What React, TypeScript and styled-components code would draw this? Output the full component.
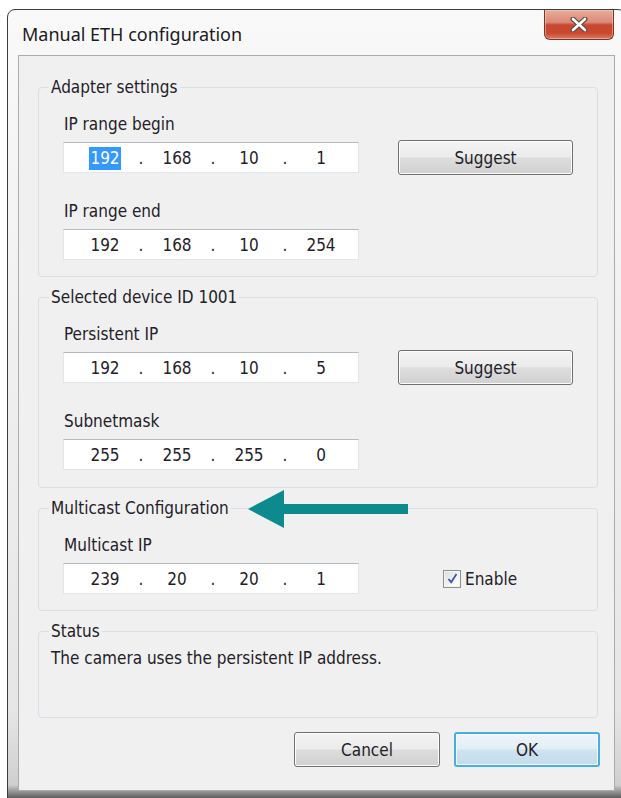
import React from 'react';
import styled, { createGlobalStyle } from 'styled-components';

const GlobalStyle = createGlobalStyle`
  html, body {
    margin: 0;
    padding: 0;
    background: #ffffff;
    overflow: hidden;
  }
  body {
    font-family: 'DejaVu Sans Condensed', 'DejaVu Sans', Tahoma, sans-serif;
    font-size: 17px;
    color: #1f2128;
  }
`;

const Window = styled.div`
  box-sizing: border-box;
  width: 619px;
  margin: 9px 0 0 7px;
  border: 1px solid #3a3d42;
  border-radius: 8px 8px 0 0;
  padding: 0 10px 8px 10px;
  background: linear-gradient(
    to bottom,
    #f9f9f9 0px,
    #f1f1f1 300px,
    #e6e6e6 700px,
    #cfcfcf 775px,
    #4a4a4a 790px
  );
`;

const TitleBar = styled.div`
  display: flex;
  align-items: flex-start;
  justify-content: space-between;
  height: 45px;
`;

const Title = styled.h1`
  margin: 13px 0 0 4px;
  font-family: 'Noto Sans', 'Open Sans', sans-serif;
  font-size: 18px;
  font-weight: 400;
  color: #1b1b24;
  line-height: 22px;
`;

const CloseButton = styled.button`
  display: flex;
  align-items: center;
  justify-content: center;
  width: 70px;
  height: 30px;
  margin-right: 1px;
  padding: 0;
  border: 1px solid #7b3325;
  border-top: none;
  border-radius: 0 0 6px 6px;
  background: linear-gradient(
    to bottom,
    #e9ab9c 0%,
    #d98b78 42%,
    #c9472e 52%,
    #c94a30 80%,
    #da7c63 100%
  );
  box-shadow: inset 0 0 0 1px rgba(255, 220, 210, 0.45);
`;

const Client = styled.div`
  box-sizing: border-box;
  height: 736px;
  border: 1px solid #a9abaf;
  background: #f0f0f0;
  padding: 21px 16px 0 19px;
  display: flex;
  flex-direction: column;
  gap: 10px;
  position: relative;
`;

const Group = styled.fieldset<{ $tail?: number; $min?: number }>`
  margin: 0;
  min-width: 0;
  border: 1px solid #d5dfe5;
  border-radius: 4px;
  padding: 0 0 ${(p) => p.$tail ?? 16}px 24px;
  min-height: ${(p) => p.$min ?? 0}px;
  box-sizing: border-box;
`;

const Legend = styled.legend`
  margin-left: -14px;
  padding: 0 2px;
  line-height: 20px;
`;

const FieldLabel = styled.div`
  line-height: 20px;
  margin: 17px 0 8px 1px;

  & + div + & {
    margin-top: 28px;
  }
`;

const Row = styled.div`
  display: flex;
  align-items: center;
  height: 31px;
`;

const IpBox = styled.div`
  box-sizing: border-box;
  display: flex;
  align-items: center;
  width: 296px;
  height: 31px;
  padding-left: 5px;
  background: #ffffff;
  border: 1px solid #e2e5ea;
  border-top-color: #b7bac1;
`;

const Octet = styled.span`
  width: 72px;
  text-align: center;
`;

const Dot = styled.span`
  display: flex;
  justify-content: center;
  width: 0;
`;

const Selection = styled.span`
  background: #3399ff;
  color: #ffffff;
  padding: 1px 1px 2px;
`;

const PushButton = styled.button<{ $primary?: boolean }>`
  box-sizing: border-box;
  width: 146px;
  height: 35px;
  font-family: inherit;
  font-size: 17px;
  color: #1f2128;
  border-radius: 3px;
  border: ${(p) => (p.$primary ? '2px solid #46aee6' : '1px solid #707070')};
  background: ${(p) =>
    p.$primary
      ? 'linear-gradient(to bottom, #edf5fa 0%, #e2eef6 48%, #cfe3f0 52%, #c3dbeb 100%)'
      : 'linear-gradient(to bottom, #f4f4f4 0%, #ebebeb 48%, #dddddd 52%, #d0d0d0 100%)'};
  box-shadow: inset 0 0 0 1px #fcfcfc;
`;

const SuggestButton = styled(PushButton)`
  width: 175px;
  margin-left: 39px;
`;

const CheckLabel = styled.label`
  display: flex;
  align-items: center;
  gap: 4px;
  margin-left: 84px;
`;

const CheckBox = styled.span`
  box-sizing: border-box;
  display: flex;
  align-items: center;
  justify-content: center;
  width: 18px;
  height: 18px;
  border: 1px solid #8f8f8f;
  background: linear-gradient(135deg, #d8dbe0 0%, #f3f4f6 60%, #ffffff 100%);
  box-shadow: inset 0 0 0 1px #f4f4f4;
`;

const StatusText = styled.div`
  line-height: 20px;
  margin: 7px 0 0 -12px;
`;

const Footer = styled.div`
  display: flex;
  justify-content: flex-end;
  gap: 14px;
  margin: 4px -2px 0 0;
`;

const Arrow = styled.svg`
  position: absolute;
  left: 229px;
  top: 433px;
`;

const IpField = ({ octets, selected }: { octets: string[]; selected?: number }) => (
  <IpBox>
    {octets.map((o, i) => (
      <React.Fragment key={i}>
        {i > 0 && <Dot>.</Dot>}
        <Octet>{selected === i ? <Selection>{o}</Selection> : o}</Octet>
      </React.Fragment>
    ))}
  </IpBox>
);

const App = () => {
  return (
    <>
      <GlobalStyle />
      <Window>
        <TitleBar>
          <Title>Manual ETH configuration</Title>
          <CloseButton aria-label="Close">
            <svg width="20" height="15" viewBox="0 0 20 15">
              <path d="M4 2 L16 13 M16 2 L4 13" stroke="#5a4a48" strokeWidth="5" strokeLinecap="round" />
              <path d="M4 2 L16 13 M16 2 L4 13" stroke="#ffffff" strokeWidth="2.6" strokeLinecap="round" />
            </svg>
          </CloseButton>
        </TitleBar>
        <Client>
          <Group>
            <Legend>Adapter settings</Legend>
            <FieldLabel>IP range begin</FieldLabel>
            <Row>
              <IpField octets={['192', '168', '10', '1']} selected={0} />
              <SuggestButton>Suggest</SuggestButton>
            </Row>
            <FieldLabel>IP range end</FieldLabel>
            <Row>
              <IpField octets={['192', '168', '10', '254']} />
            </Row>
          </Group>

          <Group $tail={17}>
            <Legend>Selected device ID 1001</Legend>
            <FieldLabel>Persistent IP</FieldLabel>
            <Row>
              <IpField octets={['192', '168', '10', '5']} />
              <SuggestButton>Suggest</SuggestButton>
            </Row>
            <FieldLabel>Subnetmask</FieldLabel>
            <Row>
              <IpField octets={['255', '255', '255', '0']} />
            </Row>
          </Group>

          <Group>
            <Legend>Multicast Configuration</Legend>
            <FieldLabel>Multicast IP</FieldLabel>
            <Row>
              <IpField octets={['239', '20', '20', '1']} />
              <CheckLabel>
                <CheckBox>
                  <svg width="11" height="11" viewBox="0 0 11 11">
                    <path d="M1.5 6 L4.2 9.2 L9.5 1" fill="none" stroke="#3a56a6" strokeWidth="1.8" />
                  </svg>
                </CheckBox>
                Enable
              </CheckLabel>
            </Row>
          </Group>

          <Group $min={97}>
            <Legend>Status</Legend>
            <StatusText>The camera uses the persistent IP address.</StatusText>
          </Group>

          <Footer>
            <PushButton>Cancel</PushButton>
            <PushButton $primary>OK</PushButton>
          </Footer>

          <Arrow width="164" height="42" viewBox="0 0 164 42">
            <polygon points="0,20 36,1 36,15 160,15 160,25 36,25 36,39" fill="#0d8a8d" />
          </Arrow>
        </Client>
      </Window>
    </>
  );
};

export default App;
